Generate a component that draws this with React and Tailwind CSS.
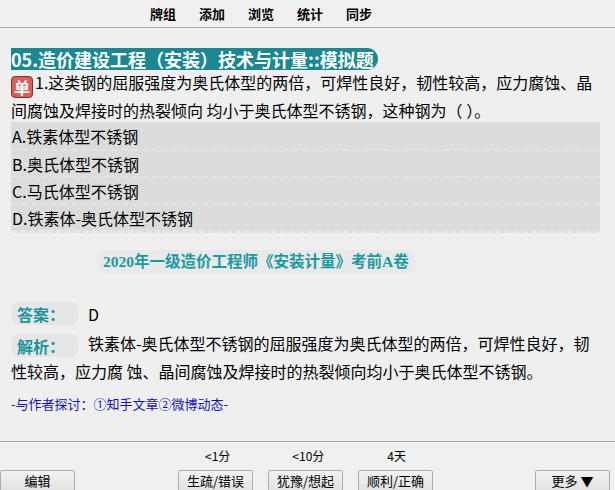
import React from 'react';

const sans = { fontFamily: '"Noto Sans CJK SC", "Noto Sans", sans-serif' };

const menu = ['牌组', '添加', '浏览', '统计', '同步'];

const options = ['A.铁素体型不锈钢', 'B.奥氏体型不锈钢', 'C.马氏体型不锈钢', 'D.铁素体-奥氏体型不锈钢'];

function Button({ children, className = '' }) {
  return (
    <div
      className={`flex h-[22px] w-[75px] items-center justify-center rounded-[2px] border border-[#adadad] bg-gradient-to-b from-[#f2f2f2] to-[#e2e2e2] text-[13px] text-black ${className}`}
    >
      {children}
    </div>
  );
}

export default function App() {
  return (
    <div className="flex h-[490px] w-[615px] flex-col overflow-hidden bg-[#efefef] text-black" style={sans}>
      <nav className="flex h-[28px] shrink-0 items-center gap-[23px] border-b border-[#a8a8a8] bg-[#f0f0f0] pl-[150px] text-[13px] font-bold">
        {menu.map(m => (
          <span key={m}>{m}</span>
        ))}
      </nav>

      <main className="flex-1 px-[11px] pt-[20px] text-[16px] leading-[24px]">
        <div className="h-[22px] w-fit rounded-r-[11px] bg-[#1a8893] pr-[4px] text-[18px] font-bold leading-[22px] text-white">
          05.造价建设工程（安装）技术与计量::模拟题
        </div>

        <div className="whitespace-nowrap">
          <span className="mr-[2px] inline-flex h-[22px] w-[22px] items-center justify-center rounded-[4px] border border-[#6b3a36] bg-[#e35d57] align-[-5px] text-[16px] font-bold leading-none text-white">
            单
          </span>
          1.这类钢的屈服强度为奥氏体型的两倍，可焊性良好，韧性较高，应力腐蚀、晶
          <br />
          间腐蚀及焊接时的热裂倾向 均小于奥氏体型不锈钢，这种钢为（ ）。
        </div>

        <div className="w-[589px] border-b-[3px] border-dashed border-[#e6e6e6] bg-[#dcdcdc]">
          {options.map((o, i) => (
            <div
              key={o}
              className={`flex h-[27px] items-center pl-[1px] ${i > 0 ? 'border-t-2 border-dashed border-[#e4e4e4]' : ''}`}
            >
              {o}
            </div>
          ))}
        </div>

        <div className="mt-[17px] flex pl-[86px]">
          <div
            className="rounded-[10px] bg-[#e9e9e9] px-[6px] text-[15.5px] font-bold leading-[24px] text-[#1a9aa1]"
            style={{ fontFamily: '"Liberation Serif", "Noto Sans CJK SC", serif' }}
          >
            2020年一级造价工程师《安装计量》考前A卷
          </div>
        </div>

        <div className="mt-[28px] flex h-[23px] items-center">
          <span className="inline-flex h-[23px] w-[67px] items-center rounded-[8px] bg-[#e6e6e6] pl-[6px] text-[16px] font-bold text-[#1c949c]">
            答案：
          </span>
          <span className="ml-[10px]">D</span>
        </div>

        <div className="mt-[4px] whitespace-nowrap leading-[28px]">
          <span className="inline-flex h-[23px] w-[67px] items-center rounded-[8px] bg-[#e6e6e6] pl-[6px] align-middle text-[16px] font-bold leading-none text-[#1c949c]">
            解析：
          </span>
          <span className="ml-[10px]">铁素体-奥氏体型不锈钢的屈服强度为奥氏体型的两倍，可焊性良好，韧</span>
          <br />
          性较高，应力腐 蚀、晶间腐蚀及焊接时的热裂倾向均小于奥氏体型不锈钢。
        </div>

        <div className="mt-[10px] text-[13px] leading-[18px] text-[#1010c8]">-与作者探讨：①知手文章②微博动态-</div>
      </main>

      <footer
        className="h-[49px] shrink-0 border-t border-[#a8a8a8] bg-[#f0f0f0] text-[13px]"
        style={{ fontFamily: '"Noto Sans CJK SC", "Liberation Serif", serif' }}
      >
        <div className="flex h-[28px] items-center text-[12px]">
          <span className="ml-[205px]">&lt;1分</span>
          <span className="ml-[62px]">&lt;10分</span>
          <span className="ml-[63px]">4天</span>
        </div>
        <div className="flex">
          <Button>编辑</Button>
          <Button className="ml-[103px]">生疏/错误</Button>
          <Button className="ml-[15px] border-[#3c7fb1]">犹豫/想起</Button>
          <Button className="ml-[15px]">顺利/正确</Button>
          <Button className="ml-[102px]">更多 ▼</Button>
        </div>
      </footer>
    </div>
  );
}
